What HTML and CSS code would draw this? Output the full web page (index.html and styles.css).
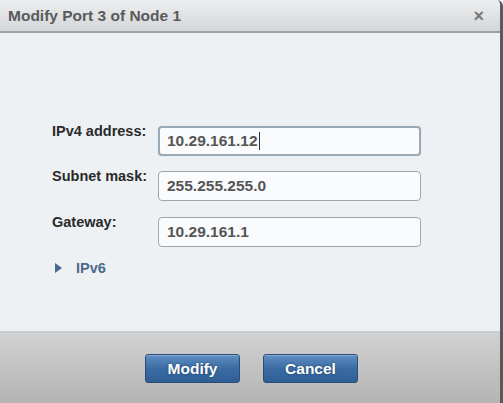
FILE: index.html
```html
<!DOCTYPE html>
<html>
<head>
<meta charset="utf-8">
<link rel="stylesheet" href="styles.css">
</head>
<body>
<div class="dialog">
  <div class="header">
    <span class="title">Modify Port 3 of Node 1</span>
    <span class="close">×</span>
  </div>
  <div class="body">
    <div class="form">
      <div class="row">
        <label class="label">IPv4 address:</label>
        <div class="input focused">10.29.161.12<span class="caret"></span></div>
      </div>
      <div class="row">
        <label class="label">Subnet mask:</label>
        <div class="input">255.255.255.0</div>
      </div>
      <div class="row">
        <label class="label">Gateway:</label>
        <div class="input">10.29.161.1</div>
      </div>
      <div class="toggle">
        <svg class="tri" width="7" height="10" viewBox="0 0 7 10"><path d="M0 0 L7 5 L0 10 Z" fill="#4a6a8c"/></svg>
        <span>IPv6</span>
      </div>
    </div>
  </div>
  <div class="footer">
    <button class="btn">Modify</button>
    <button class="btn">Cancel</button>
  </div>
</div>
</body>
</html>
```
FILE: styles.css
```css
html, body {
  margin: 0;
  padding: 0;
  width: 503px;
  height: 403px;
  overflow: hidden;
  background: #ffffff;
  font-family: "Liberation Sans", Arial, sans-serif;
}
.dialog {
  width: 503px;
  height: 403px;
  display: flex;
  flex-direction: column;
  box-sizing: border-box;
  border-right: 3px solid #5a5a5a;
  border-top-right-radius: 6px;
  overflow: hidden;
}
.header {
  height: 31px;
  flex: none;
  display: flex;
  align-items: center;
  justify-content: space-between;
  padding: 0 14px 0 8px;
  background: linear-gradient(#eceef0, #d4d7da);
  border-bottom: 2px solid #9c9fa3;
}
.title {
  font-size: 15.5px;
  font-weight: bold;
  color: #5a5a5a;
  padding-top: 1px;
}
.close {
  font-size: 18px;
  font-weight: bold;
  color: #777;
  line-height: 1;
  margin-right: 2px;
}
.body {
  flex: 1;
  background: #eef1f3;
  border-bottom: 2px solid #c9ccce;
}
.form {
  padding: 93px 0 0 52px;
  display: flex;
  flex-direction: column;
}
.row {
  display: grid;
  grid-template-columns: 106px 263px;
  align-items: start;
  margin-bottom: 15px;
}
.row:nth-child(2) { margin-bottom: 16px; }
.label {
  font-size: 14.5px;
  font-weight: bold;
  color: #2a2a2a;
  margin-top: -3px;
}
.input {
  height: 30px;
  box-sizing: border-box;
  border: 1px solid #a2a6aa;
  border-radius: 4px;
  background: #f9fbfd;
  font-size: 15.5px;
  font-weight: bold;
  color: #555;
  padding: 0 8px;
  display: flex;
  align-items: center;
}
.input.focused {
  border: 2px solid #9aa9b8;
  padding: 0 7px;
  box-shadow: 0 0 1px #b8c8d8;
}
.caret {
  display: inline-block;
  width: 1px;
  height: 18px;
  background: #333;
  margin-left: 1px;
}
.toggle {
  display: flex;
  align-items: center;
  gap: 14px;
  padding-left: 3px;
  margin-top: -2px;
  font-size: 14.5px;
  font-weight: bold;
  color: #4a6a8c;
}
.footer {
  height: 70px;
  flex: none;
  display: flex;
  justify-content: center;
  align-items: flex-start;
  gap: 23px;
  padding-top: 21px;
  padding-left: 3px;
  box-sizing: border-box;
  background: linear-gradient(#d2d1d3, #b4b4b4);
}
.btn {
  width: 95px;
  height: 29px;
  border: 1px solid #2c4d73;
  border-radius: 3px;
  background: linear-gradient(#5f8ec3, #3a6ca3 50%, #2e5e95);
  color: #fff;
  font-family: "Liberation Sans", Arial, sans-serif;
  font-size: 15.5px;
  font-weight: bold;
  text-shadow: 0 0 2px #1d3b60;
  box-shadow: inset 0 1px 0 rgba(255,255,255,0.25);
  padding: 0;
}
```
